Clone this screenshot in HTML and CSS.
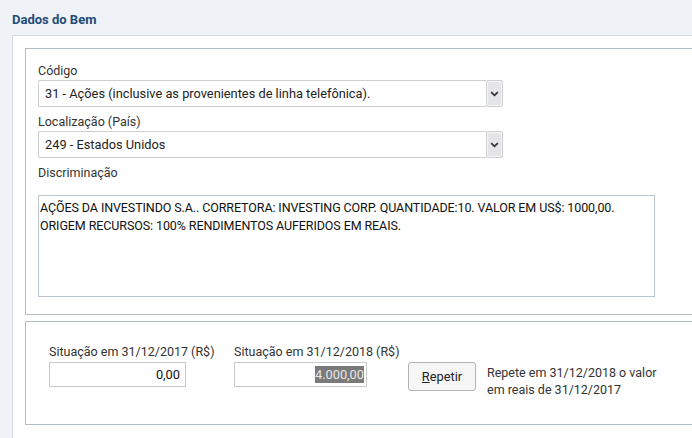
FILE: index.html
```html
<!DOCTYPE html>
<html lang="pt-BR">
<head>
<meta charset="utf-8">
<title>Dados do Bem</title>
<link rel="stylesheet" href="styles.css">
</head>
<body>
<h2 class="title">Dados do Bem</h2>
<div class="panel">
  <div class="group group-main">
    <div class="label">Código</div>
    <div class="select">
      <div class="select-value">31 - Ações (inclusive as provenientes de linha telefônica).</div>
      <div class="select-btn"><svg width="9" height="6" viewBox="0 0 9 6"><path d="M1.2 1.2 L4.5 4.4 L7.8 1.2" fill="none" stroke="#333" stroke-width="1.7"/></svg></div>
    </div>
    <div class="label">Localização (País)</div>
    <div class="select">
      <div class="select-value">249 - Estados Unidos</div>
      <div class="select-btn"><svg width="9" height="6" viewBox="0 0 9 6"><path d="M1.2 1.2 L4.5 4.4 L7.8 1.2" fill="none" stroke="#333" stroke-width="1.7"/></svg></div>
    </div>
    <div class="label label-disc">Discriminação</div>
    <div class="textarea">AÇÕES DA INVESTINDO S.A.. CORRETORA: INVESTING CORP. QUANTIDADE:10. VALOR EM US$: 1000,00.<br>ORIGEM RECURSOS: 100% RENDIMENTOS AUFERIDOS EM REAIS.</div>
  </div>
  <div class="group group-values">
    <div class="field field-a">
      <div class="label">Situação em 31/12/2017 (R$)</div>
      <div class="input input-a">0,00</div>
    </div>
    <div class="field field-b">
      <div class="label">Situação em 31/12/2018 (R$)</div>
      <div class="input input-b"><span class="sel">4.000,00</span></div>
    </div>
    <button class="btn" type="button"><u>R</u>epetir</button>
    <div class="hint">Repete em 31/12/2018 o valor<br>em reais de 31/12/2017</div>
  </div>
</div>
</body>
</html>
```
FILE: styles.css
```css
html, body {
  margin: 0;
  padding: 0;
  overflow: hidden;
}
body {
  background: #eff2f7;
  font-family: Roboto, "Liberation Sans", Arial, sans-serif;
  font-size: 12.5px;
  color: #333;
  width: 692px;
  height: 438px;
}
.title {
  margin: 0;
  padding: 12px 0 0 12px;
  height: 23px;
  font-size: 13px;
  font-weight: bold;
  color: #1e4c76;
  line-height: 16px;
}
.panel {
  margin-left: 12px;
  width: 740px;
  height: 420px;
  background: #fff;
  border-top: 1px solid #d2d8e0;
  border-left: 1px solid #d2d8e0;
  padding: 12px 0 0 12px;
  box-sizing: border-box;
}
.group {
  border: 1px solid #b4bcc6;
  background: #fff;
}
.group-main {
  padding: 13px 0 17px 12px;
  height: 267px;
  box-sizing: border-box;
}
.label {
  line-height: 17px;
  height: 18px;
  color: #333;
  white-space: nowrap;
}
.select {
  display: flex;
  width: 465px;
  height: 27px;
  margin-bottom: 6px;
}
.select-value {
  flex: 1;
  border: 1px solid #cfcfcf;
  border-right: none;
  border-radius: 2px 0 0 2px;
  padding: 0 6px;
  line-height: 25px;
  font-size: 12.8px;
  color: #222;
  white-space: nowrap;
  overflow: hidden;
}
.select-btn {
  width: 15px;
  border: 1px solid #cfcfcf;
  border-radius: 2px;
  background: #e4e5e9;
  box-shadow: inset 0 0 0 1px #f4f4f6;
  display: flex;
  align-items: center;
  justify-content: center;
}
.label-disc {
  height: 31px;
}
.textarea {
  width: 617px;
  height: 102px;
  box-sizing: border-box;
  border: 1px solid #bcc5ce;
  padding: 3px 1px 2px;
  font-size: 12.5px;
  line-height: 18px;
  color: #111;
  letter-spacing: -0.1px;
  white-space: nowrap;
}
.group-values {
  margin-top: 6px;
  height: 104px;
  box-sizing: border-box;
  padding: 21px 0 0 23px;
  display: flex;
  align-items: flex-start;
}
.field-a { width: 185px; }
.field-b { width: 174px; }
.input {
  margin-top: 1px;
  height: 25px;
  box-sizing: border-box;
  border: 1px solid #c9c9c9;
  text-align: right;
  padding: 0 5px;
  line-height: 23px;
  font-size: 12.8px;
  color: #111;
}
.input-a { width: 137px; }
.input-b { width: 133px; padding-right: 2px; }
.sel {
  background: #7a7a7a;
  color: #e8e8e8;
  padding: 1px 0;
}
.btn {
  margin-top: 19px;
  width: 68px;
  height: 29px;
  border: 1px solid #b3b3b3;
  border-radius: 3px;
  background: #f6f6f6;
  font-family: Roboto, "Liberation Sans", Arial, sans-serif;
  font-size: 12.8px;
  color: #222;
  padding: 0;
}
.hint {
  margin-left: 11px;
  margin-top: 21px;
  line-height: 17px;
  color: #333;
  white-space: nowrap;
}
```
